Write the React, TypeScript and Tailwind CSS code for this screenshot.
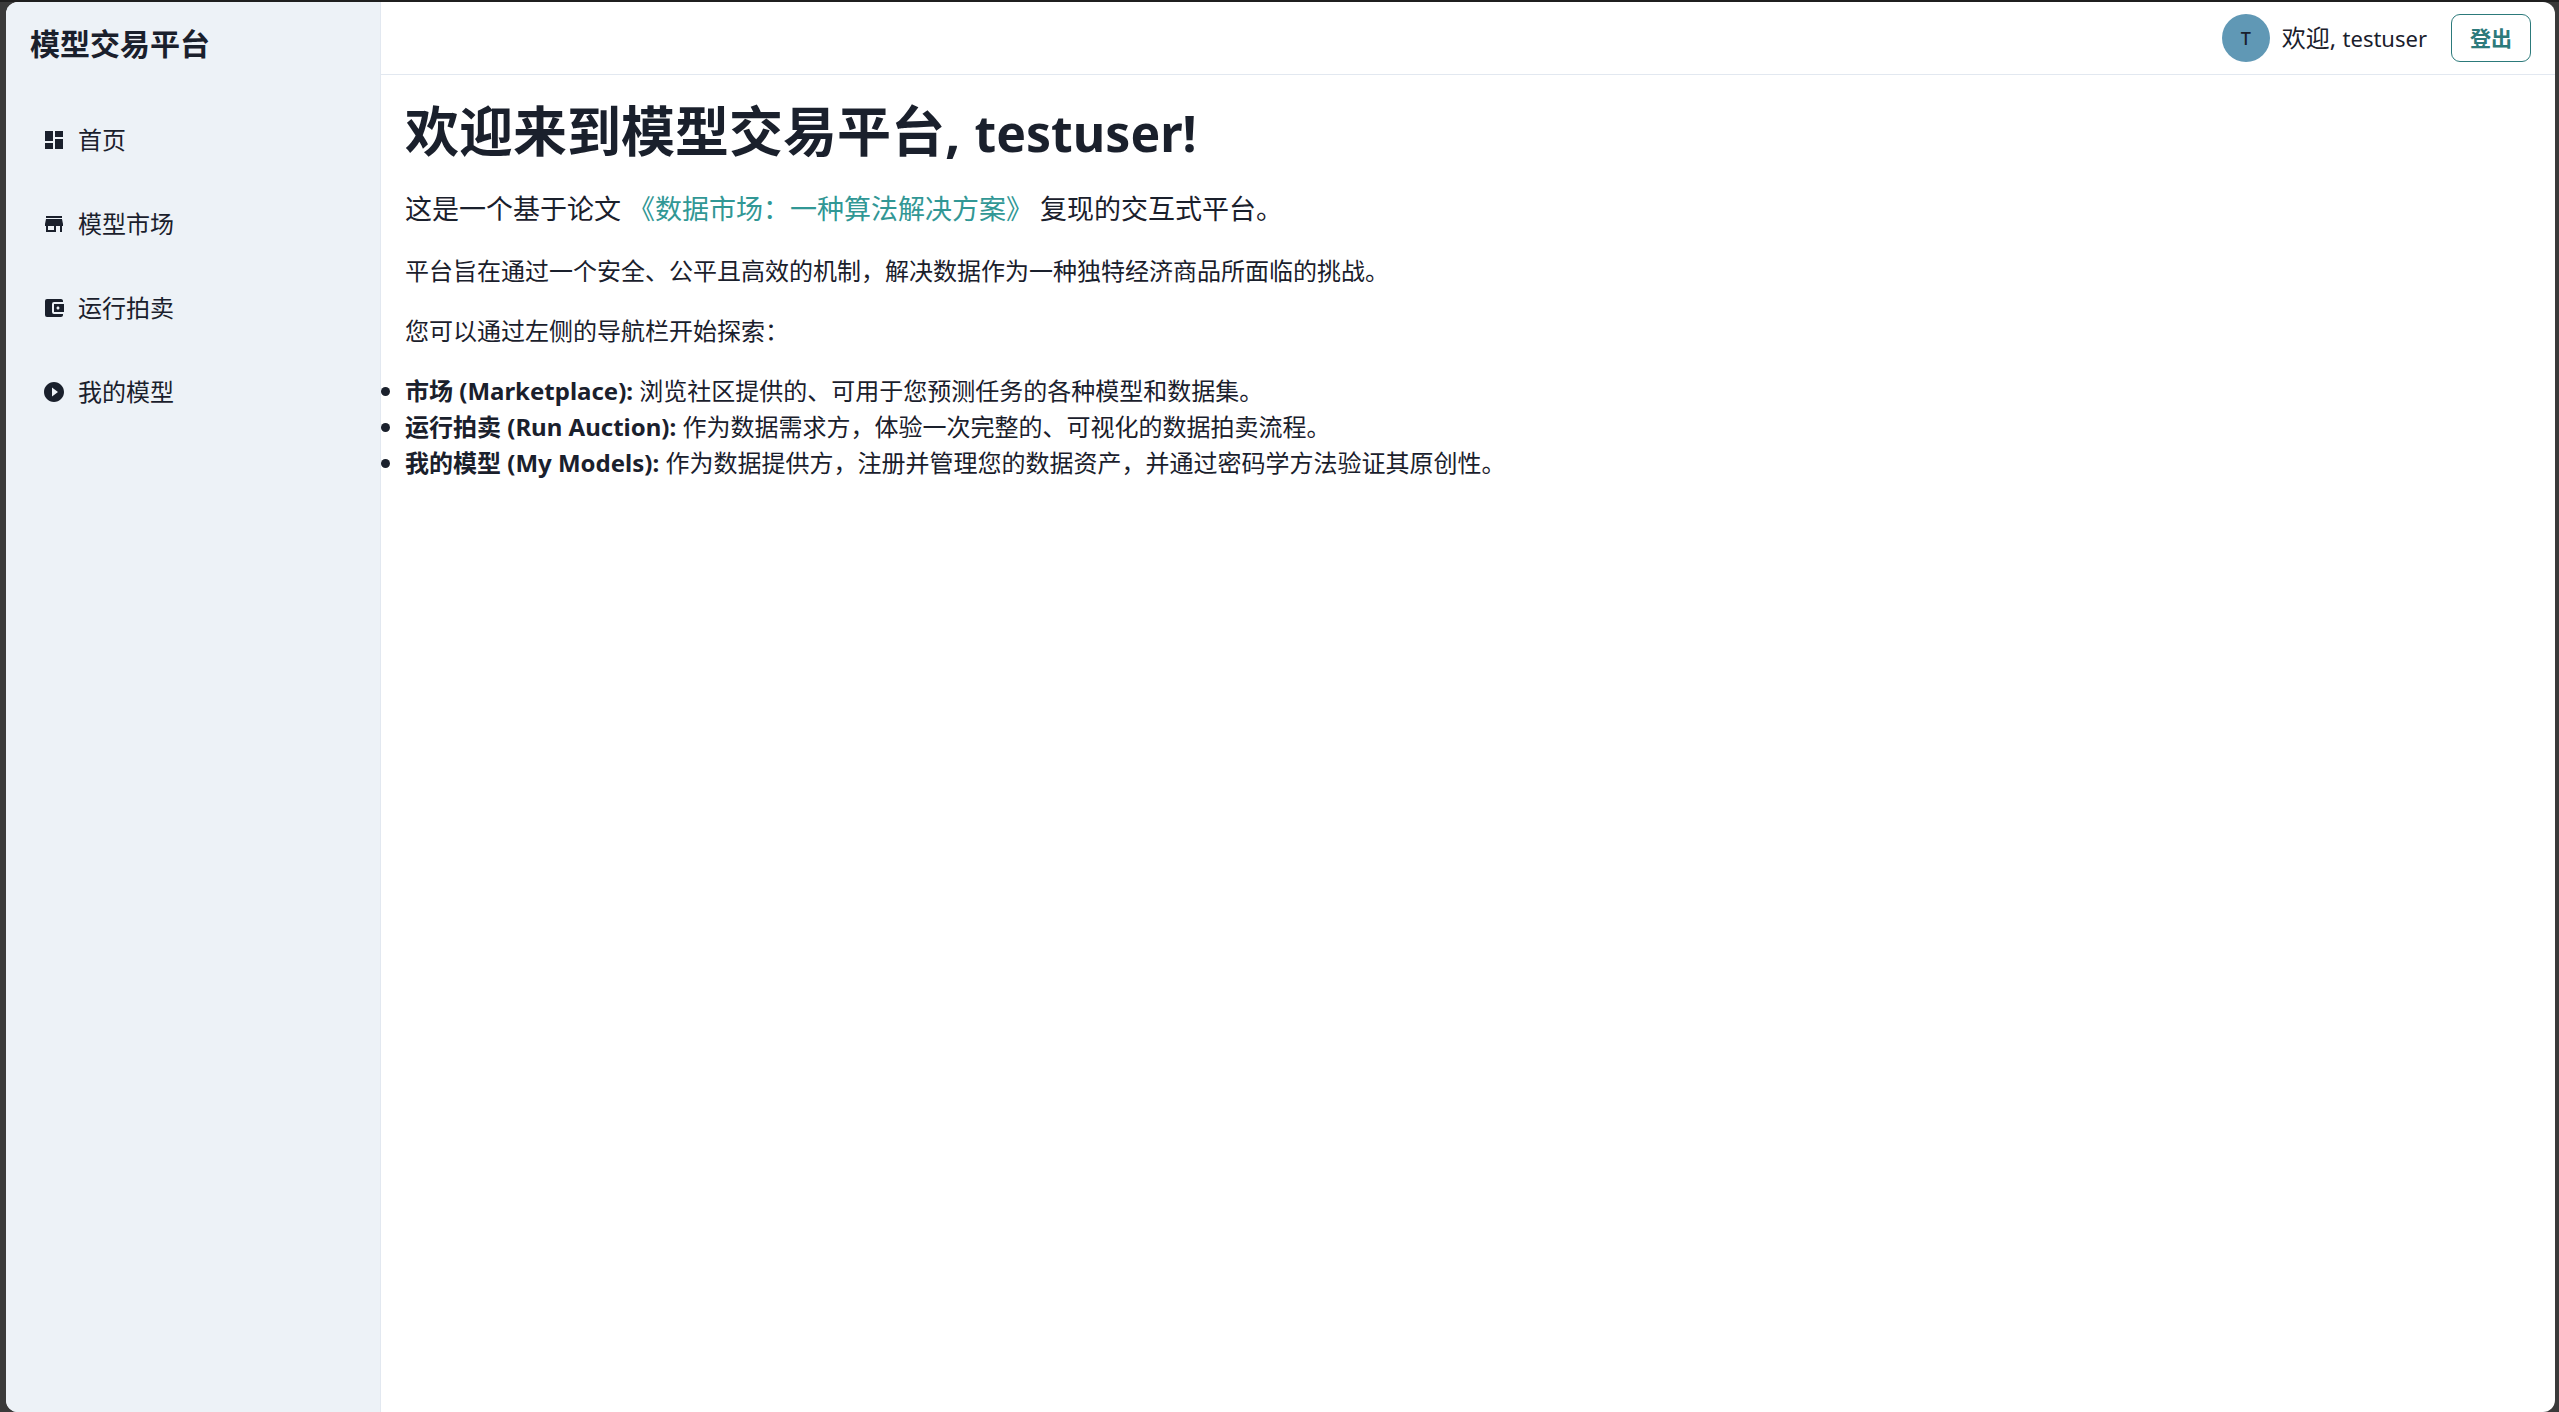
import type { IconType } from 'react-icons';
import {
  MdAccountBalanceWallet,
  MdDashboard,
  MdPlayCircleFilled,
  MdStore,
} from 'react-icons/md';

type NavEntry = { label: string; icon: IconType };

const navEntries: NavEntry[] = [
  { label: '首页', icon: MdDashboard },
  { label: '模型市场', icon: MdStore },
  { label: '运行拍卖', icon: MdAccountBalanceWallet },
  { label: '我的模型', icon: MdPlayCircleFilled },
];

const features = [
  { title: '市场 (Marketplace):', text: '浏览社区提供的、可用于您预测任务的各种模型和数据集。' },
  { title: '运行拍卖 (Run Auction):', text: '作为数据需求方，体验一次完整的、可视化的数据拍卖流程。' },
  {
    title: '我的模型 (My Models):',
    text: '作为数据提供方，注册并管理您的数据资产，并通过密码学方法验证其原创性。',
  },
];

function Sidebar() {
  return (
    <aside className="flex w-[375px] shrink-0 flex-col border-r border-[#e2e8f0] bg-[#edf2f7]">
      <p className="px-6 pt-6 text-[30px] leading-9 font-bold">模型交易平台</p>
      <nav className="flex flex-col px-3 pt-9">
        {navEntries.map(({ label, icon: Icon }) => (
          <a key={label} href="#" className="flex items-center gap-3 px-6 py-6 leading-9">
            <Icon className="size-6 shrink-0" aria-hidden="true" />
            {label}
          </a>
        ))}
      </nav>
    </aside>
  );
}

function Header() {
  return (
    <header className="flex items-center justify-end border-b border-[#e2e8f0] px-6 py-3">
      <div className="flex size-12 items-center justify-center rounded-full bg-[#6098b5] text-lg font-medium">
        T
      </div>
      <p className="ml-3">
        欢迎, <span className="text-[22px]">testuser</span>
      </p>
      <button
        type="button"
        className="ml-6 h-12 rounded-[9px] border border-[#2c7a7b] px-[18px] text-[21px] font-bold text-[#2c7a7b]"
      >
        登出
      </button>
    </header>
  );
}

function Welcome() {
  return (
    <main className="flex flex-col gap-6 p-6">
      <h1 className="text-[54px] leading-[65px] font-bold">
        欢迎来到模型交易平台, <span className="text-[50px] leading-none">testuser!</span>
      </h1>
      <p className="text-[27px] leading-[41px]">
        这是一个基于论文{' '}
        <a href="#" className="text-[#319795]">
          《数据市场：一种算法解决方案》
        </a>{' '}
        复现的交互式平台。
      </p>
      <p>平台旨在通过一个安全、公平且高效的机制，解决数据作为一种独特经济商品所面临的挑战。</p>
      <p>您可以通过左侧的导航栏开始探索：</p>
      <ul className="list-disc">
        {features.map(({ title, text }) => (
          <li key={title}>
            <strong className="font-bold">{title}</strong> {text}
          </li>
        ))}
      </ul>
    </main>
  );
}

export default function App() {
  return (
    <div
      lang="zh-CN"
      className="flex min-h-screen border-t-2 border-[#1f1f1f] bg-[#3a3a3a] pr-1 pl-[6px] font-['Noto_Sans','Noto_Sans_CJK_SC',sans-serif] text-2xl leading-9 text-[#1a202c]"
    >
      <div className="flex min-w-0 grow overflow-hidden rounded-xl bg-white">
        <Sidebar />
        <div className="min-w-0 grow">
          <Header />
          <Welcome />
        </div>
      </div>
    </div>
  );
}
